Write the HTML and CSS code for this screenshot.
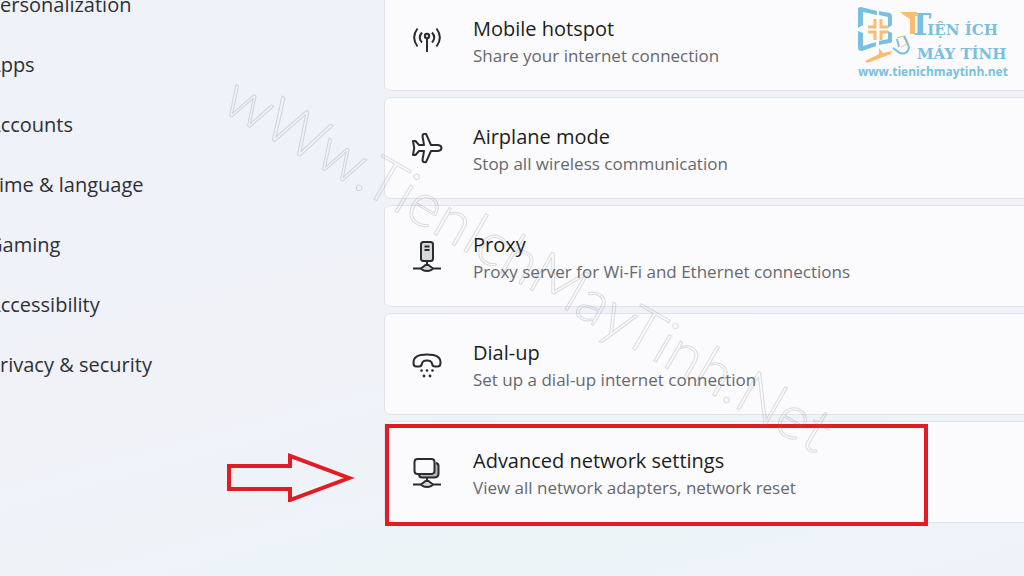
FILE: index.html
```
<!DOCTYPE html>
<html lang="en">
<head>
    <meta charset="utf-8">
    <title>Network &amp; internet</title>
    <link rel="stylesheet" href="styles.css">
</head>
<body>
    <div class="settings">
        <nav class="sidebar">
            <a href="#">Personalization</a>
            <a href="#">Apps</a>
            <a href="#">Accounts</a>
            <a href="#">Time &amp; language</a>
            <a href="#">Gaming</a>
            <a href="#">Accessibility</a>
            <a href="#">Privacy &amp; security</a>
        </nav>

        <main class="cards">
            <a class="card" href="#">
                <svg class="icon" viewBox="0 0 32 32">
                    <path d="M6.5 3.5Q-.2 12.5 6.5 21.5M11 7.500Q6.500 12.500 11 17.500M25.500 3.500Q32.200 12.500 25.500 21.500M21 7.500Q25.500 12.500 21 17.500"/>
                    <circle class="shade" cx="16" cy="11" r="2.200"/>
                    <path d="M16 13V27"/>
                </svg>
                <span class="text">
                    <span class="title">Mobile hotspot</span>
                    <span class="sub">Share your internet connection</span>
                </span>
            </a>
            <a class="card" href="#">
                <svg class="icon" viewBox="0 0 32 32">
                    <path d="M2 8H4.500L8 12H13L11.500 3Q11.500 .8 14 .8H15L20 12H27Q30.500 12.500 30.500 15T27 18H20L15 29.200H14Q11.500 29.200 11.500 27L13 18H8L4.500 22H2L3.200 15Z"/>
                </svg>
                <span class="text">
                    <span class="title">Airplane mode</span>
                    <span class="sub">Stop all wireless communication</span>
                </span>
            </a>
            <a class="card" href="#">
                <svg class="icon" viewBox="0 0 32 32">
                    <rect class="shade" x="10" y="1" width="12" height="19" rx="2.500"/>
                    <path d="M13.500 5.500H18.500M13.500 9H18.500M16 20V24M2 27.500H10M22 27.500H30"/>
                    <path class="shade" d="M10 27.500L14.500 24H17.500L22 27.500Q20 30 16 30T10 27.500Z"/>
                </svg>
                <span class="text">
                    <span class="title">Proxy</span>
                    <span class="sub">Proxy server for Wi-Fi and Ethernet connections</span>
                </span>
            </a>
            <a class="card" href="#">
                <svg class="icon" viewBox="0 0 32 32">
                    <path d="M2.500 14Q2 5.500 16 5.500T29.500 14Q29.500 17.500 26.500 17.500H24Q21.500 17.500 21 14.500Q20.500 11.500 16 11.500T11 14.500Q10.500 17.500 8 17.500H5.500Q2.500 17.500 2.500 14Z"/>
                    <g class="dots"><circle cx="10.500" cy="21.500" r="1.300"/><circle cx="16" cy="21.500" r="1.300"/><circle cx="21.500" cy="21.500" r="1.300"/><circle cx="13" cy="27" r="1.400"/><circle cx="19" cy="27" r="1.400"/></g>
                </svg>
                <span class="text">
                    <span class="title">Dial-up</span>
                    <span class="sub">Set up a dial-up internet connection</span>
                </span>
            </a>
            <a class="card" href="#">
                <svg class="icon" viewBox="0 0 32 32">
                    <path class="under" d="M8 19.500H23Q25.500 19.500 25.500 17V6"/>
                    <rect class="screen" x="3.500" y="2" width="20" height="15" rx="3"/>
                    <path d="M8 17Q8 20.500 11 20.500H23Q27.500 20.500 27.500 16.500V9Q27.500 6.500 25 6M16 20.500V24M2 27.500H10M22 27.500H30"/>
                    <path class="shade" d="M10 27.500L14.500 24H17.500L22 27.500Q20 30 16 30T10 27.500Z"/>
                </svg>
                <span class="text">
                    <span class="title">Advanced network settings</span>
                    <span class="sub">View all network adapters, network reset</span>
                </span>
            </a>
        </main>
    </div>

    <div class="highlight"></div>
    <svg class="arrow" viewBox="0 0 130 50">
        <path d="M3 14H64V4L123 26L64 48V37H3Z"/>
    </svg>

    <div class="watermark">wWw.TienIchMayTinh.Net</div>

    <div class="brand">
        <svg class="brand-mark" viewBox="0 0 80 60">
            <path class="blue" d="M1 4Q1 2 4 2L20 6V10L6 7V20L1 23Z"/>
            <path class="blue" d="M1 26L6 28V41L19 37V41L5 46Q1 46 1 43Z"/>
            <path class="blue" d="M22 6L33 8Q35 9 35 11V20L31 23V12L22 10Z"/>
            <path class="blue" d="M31 26L35 28V36Q35 38 33 38L22 40V36L31 34Z"/>
            <path class="orange-line" d="M18 14V22H11M24 14V22H31M18 35V27H11M24 35V27H31"/>
            <path class="orange" d="M8 56L22 49V43L26 48L35 46L34 49L10 58Z"/>
            <path class="orange" d="M43 7H60L62 11H58V29H53V14L48 11Z"/>
            <path class="orange-line thin" d="M40 33L46 31L50 39L44 42"/>
            <path class="cup" d="M40 34L42 42M47 31Q51 38 52 43Q50 50 43 48L36 43"/>
        </svg>
        <div class="brand-name">
            <div class="first"><span class="big">T</span>IỆN ÍCH</div>
            <div>MÁY TÍNH</div>
        </div>
        <a class="brand-url" href="#">www.tienichmaytinh.net</a>
    </div>
</body>
</html>
```

FILE: styles.css
```
:root {
    --text: #1c1d20;
    --muted: #66686d;
    --card: #fbfbfe;
    --line: #e1e3ea;
    --red: #e31b23;
    --blue: #78bfe0;
    --orange: #f8bd72;
}

* {
    box-sizing: border-box;
}

body {
    margin: 0;
    height: 100vh;
    position: relative;
    overflow: hidden;
    font-family: "Open Sans", "Noto Sans", sans-serif;
    color: var(--text);
    background: linear-gradient(165deg, #eff2f8 0%, #f0f2f8 55%, #ecf4f8 80%, #eff3f9 100%);
}

a {
    color: inherit;
    text-decoration: none;
}

/* the pane is scrolled, so both columns start above the window */
.settings {
    display: grid;
    grid-template-columns: 384px 1fr;
    align-items: start;
}

.sidebar {
    display: flex;
    flex-direction: column;
    margin: -25px 0 0 -12px;
}

.sidebar a {
    font-size: 20px;
    line-height: 60px;
    color: #2d3036;
}

.cards {
    display: flex;
    flex-direction: column;
    gap: 6px;
    margin: -11px -12px 0 0;
}

.card {
    display: flex;
    align-items: center;
    gap: 30px;
    height: 102px;
    padding: 2px 26px 0;
    background: var(--card);
    border: 1px solid var(--line);
    border-radius: 6px;
}

.icon {
    width: 32px;
    height: 32px;
    fill: none;
    stroke: #2b2c30;
    stroke-width: 2;
    stroke-linejoin: round;
}

.icon .shade {
    fill: #d6d7db;
}

.icon .screen {
    fill: var(--card);
}

.icon .under {
    stroke: #b5b6ba;
    stroke-width: 3;
}

.icon .dots {
    fill: #2b2c30;
    stroke: none;
}

.text {
    display: flex;
    flex-direction: column;
    padding-top: 2px;
}

.title {
    font-size: 20px;
    line-height: 28px;
}

.sub {
    font-size: 17px;
    line-height: 26px;
    color: var(--muted);
}

/* annotations drawn over the page */
.highlight {
    position: absolute;
    left: 385px;
    top: 424px;
    width: 543px;
    height: 102px;
    border: 4px solid var(--red);
}

.arrow {
    position: absolute;
    left: 226px;
    top: 452px;
    width: 130px;
    height: 50px;
    fill: none;
    stroke: var(--red);
    stroke-width: 4;
}

.watermark {
    position: absolute;
    left: 246px;
    top: 64px;
    transform: rotate(30deg);
    transform-origin: 0 0;
    font-family: Lato, sans-serif;
    font-weight: 300;
    font-size: 61px;
    line-height: 60px;
    white-space: nowrap;
    color: transparent;
    -webkit-text-stroke: 1px rgba(120, 122, 130, 0.25);
    pointer-events: none;
}

.brand {
    position: absolute;
    right: 13px;
    top: 5px;
    width: 154px;
    height: 76px;
    color: var(--blue);
}

.brand-mark {
    position: absolute;
    left: 0;
    top: 0;
    width: 80px;
    height: 60px;
    fill: none;
}

.blue {
    fill: var(--blue);
}

.orange-line {
    stroke: var(--orange);
    stroke-width: 3;
}

.orange-line.thin {
    stroke-width: 1;
}

.orange {
    fill: var(--orange);
}

.cup {
    stroke: var(--blue);
    stroke-width: 2;
}

.brand-name {
    padding: 8px 0 0 60px;
    font-family: "DejaVu Serif", serif;
    font-weight: bold;
    font-size: 15px;
    line-height: 24px;
    white-space: nowrap;
}

.brand-name .first {
    margin-left: -8px;
}

.brand-name .big {
    margin-right: -4px;
    font-size: 30px;
    line-height: 24px;
}

.brand-url {
    position: absolute;
    left: 1px;
    bottom: 1px;
    font-size: 12px;
    line-height: 16px;
    font-weight: bold;
}
```
